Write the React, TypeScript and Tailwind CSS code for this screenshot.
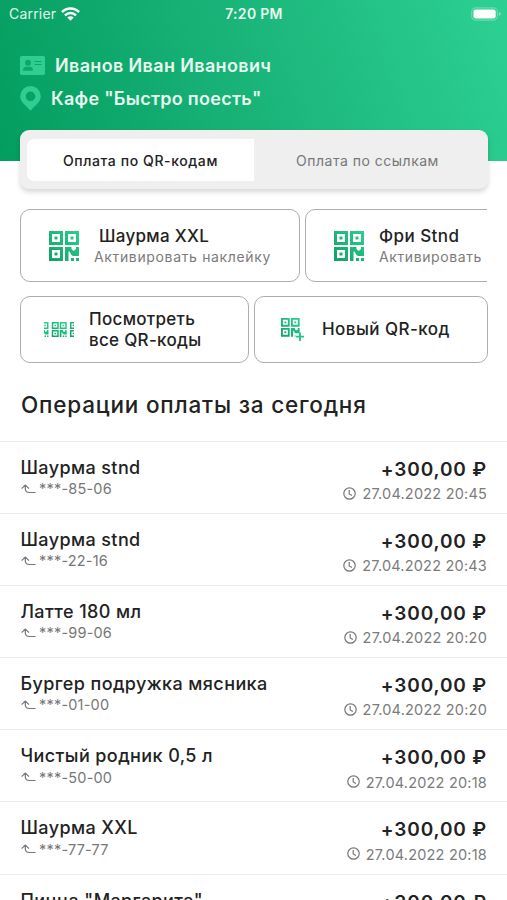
import React from 'react';

const QrShape = () => (
  <g fillRule="evenodd">
    <path d="M0 0h14v14H0zM3 3v8h8V3zM5.500 5.500h3v3h-3z" />
    <path d="M16 0h14v14H16zM19 3v8h8V3zM21.500 5.500h3v3h-3z" />
    <path d="M0 16h14v14H0zM3 19v8h8v-8zM5.500 21.500h3v3h-3z" />
    <path d="M16 16h6.500v2l2 2 2.500-2v-2h3v9h-6l-1.500-1-2-3.500h-1V30H16zM22 27h3v3h-3zM27 27h3v3h-3z" />
  </g>
);

const Gradient = ({ id }: { id: string }) => (
  <defs>
    <linearGradient id={id} x1="0" y1="30" x2="30" y2="0" gradientUnits="userSpaceOnUse">
      <stop offset="0" stopColor="#129f66" />
      <stop offset="1" stopColor="#2bd08f" />
    </linearGradient>
  </defs>
);

const QrIcon = ({ id }: { id: string }) => (
  <svg className="h-[30px] w-[30px] shrink-0" viewBox="0 0 30 30" fill={`url(#${id})`}>
    <Gradient id={id} />
    <QrShape />
  </svg>
);

const QrStrip = () => (
  <svg className="h-[15px] w-[30px] shrink-0" viewBox="0 0 60 30" fill="url(#strip)">
    <Gradient id="strip" />
    <g transform="translate(-21 0)"><QrShape /></g>
    <g transform="translate(15.500 0)"><QrShape /></g>
    <g transform="translate(52 0)"><QrShape /></g>
  </svg>
);

const QrAdd = () => (
  <svg className="h-[23px] w-[23px] shrink-0" viewBox="0 0 37 37" fill="url(#add)">
    <Gradient id="add" />
    <QrShape />
    <path d="M23 25h12v12H23z" fill="#fff" />
    <path d="M29 23.500h3v5h5v3h-5V37h-3v-5.500h-5v-3h5z" fill="#25c485" />
  </svg>
);

const ReturnIcon = () => (
  <svg className="-mt-px h-[10px] w-[15px] shrink-0" viewBox="0 0 15 10" fill="none" stroke="#777" strokeWidth="1.200">
    <path d="M.6 4.600 4.300 1l3.700 3.600M4.300 1.200v3.800q.3 3.500 4 3.500H14.500" />
  </svg>
);

const ClockIcon = () => (
  <svg className="-mt-px h-[13px] w-[13px] shrink-0" viewBox="0 0 13 13" fill="none" stroke="#777" strokeWidth="1.200">
    <circle cx="6.500" cy="6.500" r="5.700" />
    <path d="M6.200 3v3.900l2.800 1.700" />
  </svg>
);

const operations = [
  ['Шаурма stnd', '85-06', '20:45'],
  ['Шаурма stnd', '22-16', '20:43'],
  ['Латте 180 мл', '99-06', '20:20'],
  ['Бургер подружка мясника', '01-00', '20:20'],
  ['Чистый родник 0,5 л', '50-00', '20:18'],
  ['Шаурма XXL', '77-77', '20:18'],
  ['Пицца "Маргарита"', '41-12', '20:17'],
];

export default function App() {
  return (
    <div className="h-[900px] w-[507px] overflow-hidden bg-white font-['Inter','Liberation_Sans',sans-serif] text-[#222]">
      <header className="h-[161px] bg-[linear-gradient(72deg,#029d5f_0%,#17b075_42%,#2dd093_100%)] text-white">
        <div className="grid h-7 grid-cols-3 items-center pr-[6px] pl-[9px] text-[14px] leading-none">
          <div className="flex items-center gap-[5px] text-[#e1f6ed]">
            <span className="tracking-[0.2px]">Carrier</span>
            <svg className="mb-px h-[14px] w-[19px]" viewBox="0 0 19 14" fill="none" stroke="#fff" strokeWidth="2.500">
              <path d="M1 5.100a12 12 0 0 1 17 0M4 8.300a7.800 7.800 0 0 1 11 0" />
              <path d="M9.500 13.800 6.300 10.500a4.500 4.500 0 0 1 6.400 0z" fill="#fff" stroke="none" />
            </svg>
          </div>
          <span className="-ml-[2px] text-center text-[14px] font-semibold tracking-[0.3px] text-[#e9f9f2]">7:20 PM</span>
          <svg className="mb-px h-[14px] w-[30px] justify-self-end" viewBox="0 0 31 14">
            <rect x=".7" y=".7" width="26.600" height="12.600" rx="4" fill="none" stroke="#6bdcae" strokeWidth="1.200" />
            <rect x="2.500" y="2.300" width="23" height="9.400" rx="2.400" fill="#fff" />
            <path d="M28.800 5v4q2-.8 2-2t-2-2z" fill="#83e3bd" />
          </svg>
        </div>
        <div className="flex flex-col pt-[21px] pl-5 text-[18px] font-semibold text-[#e6f8f0]">
          <div className="flex h-[33px] items-center gap-[10px]">
            <svg className="h-[19px] w-[25px]" viewBox="0 0 25 19">
              <rect width="25" height="19" rx="1.800" fill="#2fcd90" />
              <g fill="#12a56b">
                <circle cx="8" cy="6.800" r="3" />
                <path d="M3 14.800q0-4 3-4h4q3 0 3 4zM14.500 5h7v1h-7zM14.500 8h7v1h-7z" />
              </g>
            </svg>
            <span className="whitespace-nowrap tracking-[0.35px]">Иванов Иван Иванович</span>
          </div>
          <div className="flex h-[33px] items-center gap-[10px]">
            <svg className="h-[25px] w-[21px]" viewBox="0 0 21 25">
              <path fillRule="evenodd" fill="#2fcd90" d="M10.500 0a10.300 10.300 0 0 1 10.300 10.300c0 6-5.300 8.700-10.300 14.400C5.500 19 .2 16.300.2 10.300A10.300 10.300 0 0 1 10.500 0m0 5.500a4.800 4.800 0 1 0 0 9.600 4.800 4.800 0 0 0 0-9.600" />
            </svg>
            <span className="whitespace-nowrap tracking-[0.28px]">Кафе "Быстро поесть"</span>
          </div>
        </div>
      </header>

      <div className="relative mx-auto -mt-[31px] mr-[19px] ml-5 flex h-[59px] rounded-[9px] bg-[#efefef] px-[7px] pt-[9px] pb-2 text-[14px] shadow-[0_3px_5px_rgba(0,0,0,0.16)]">
        <div className="flex w-[227px] items-center justify-center rounded-l-[7px] bg-white font-medium tracking-[0.6px]">Оплата по QR-кодам</div>
        <div className="flex flex-1 items-center justify-center tracking-[0.5px] text-[#777]">Оплата по ссылкам</div>
      </div>

      <div className="mt-5 ml-5 flex w-[467px] gap-[5px] overflow-hidden">
        <div className="flex h-[73px] w-[280px] shrink-0 items-center gap-[15px] rounded-[10px] border-[1.500px] border-[#adadad] pl-7">
          <QrIcon id="qr-a" />
          <div className="pt-px whitespace-nowrap">
            <div className="pl-[5px] text-[17px] leading-[21px] font-medium tracking-[0.3px]">Шаурма XXL</div>
            <div className="text-[14px] leading-[20px] tracking-[0.65px] text-[#7b7b7b]">Активировать наклейку</div>
          </div>
        </div>
        <div className="flex h-[73px] w-[280px] shrink-0 items-center gap-[15px] rounded-[10px] border-[1.500px] border-[#adadad] pl-7">
          <QrIcon id="qr-b" />
          <div className="pt-px whitespace-nowrap">
            <div className="text-[17px] leading-[21px] font-medium tracking-[0.45px]">Фри Stnd</div>
            <div className="text-[14px] leading-[20px] tracking-[0.6px] text-[#7b7b7b]">Активировать</div>
          </div>
        </div>
      </div>

      <div className="mt-[14px] ml-5 flex w-[468px] gap-[5px] text-[17px] leading-[21px] font-medium tracking-[0.3px]">
        <div className="flex h-[67px] w-[229px] items-center gap-[15px] rounded-[10px] border-[1.500px] border-[#adadad] pl-[23px]">
          <QrStrip />
          <div className="whitespace-nowrap">Посмотреть<br />все QR-коды</div>
        </div>
        <div className="flex h-[67px] w-[234px] items-center gap-[18px] rounded-[10px] border-[1.500px] border-[#adadad] pl-[26px]">
          <QrAdd />
          <div className="tracking-[0.45px] whitespace-nowrap">Новый QR-код</div>
        </div>
      </div>

      <h1 className="flex h-[78px] items-center pt-[6px] pl-[21px] text-[22.500px] font-medium tracking-[0.8px] whitespace-nowrap">Операции оплаты за сегодня</h1>

      <main>
        {operations.map(([name, code, time], index) => (
          <section key={index} className="flex h-[72.100px] justify-between border-t-[1.500px] border-[#ececec] pr-5 pl-[20.500px] whitespace-nowrap">
            <div className="pt-[14px]">
              <div className="text-[18px] leading-6 font-medium tracking-[0.4px]">{name}</div>
              <div className="-mt-px flex h-5 items-center gap-[3.500px] text-[14.500px] tracking-[0.2px] text-[#777]">
                <ReturnIcon />
                <span>***-{code}</span>
              </div>
            </div>
            <div className="flex flex-col items-end pt-[15px]">
              <div className="text-[19px] leading-[26px] font-semibold tracking-[0.85px]">+300,00 ₽</div>
              <div className="flex h-[22px] items-center gap-[6px] text-[14.500px] tracking-[0.200px] text-[#7b7b7b]">
                <ClockIcon />
                <span>27.04.2022 {time}</span>
              </div>
            </div>
          </section>
        ))}
      </main>
    </div>
  );
}
